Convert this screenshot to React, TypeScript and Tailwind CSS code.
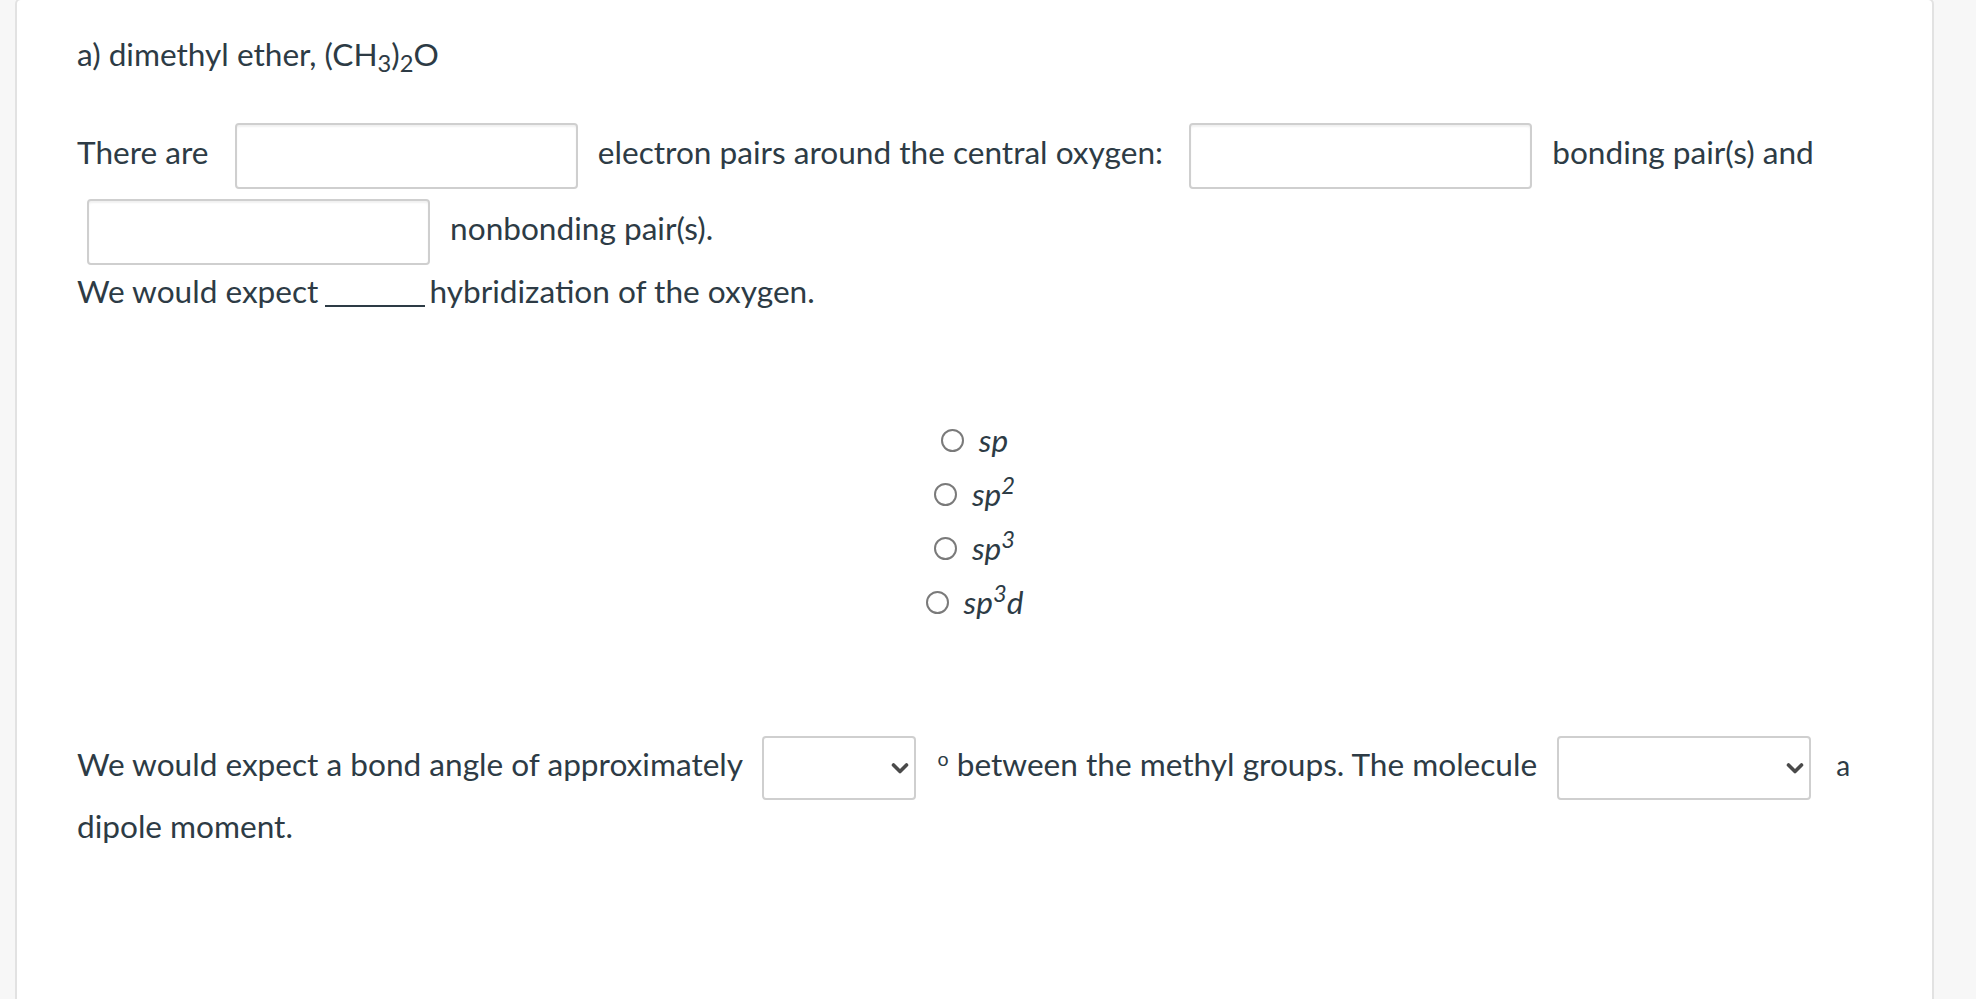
import React from "react";

function Blank({ w }: { w: string }) {
  return (
    <span
      className={`inline-block align-middle h-[66px] my-[5px] ml-[10px] mr-[12px] rounded-[4px] border-2 border-[#cfcfcf] bg-white shadow-[inset_0_2px_2px_rgba(0,0,0,0.06)] ${w}`}
    />
  );
}

function Select({ w }: { w: string }) {
  return (
    <span
      className={`inline-flex items-center justify-end align-middle h-[64px] my-[5px] ml-[12px] mr-[13px] pr-[5px] rounded-[4px] border-2 border-[#cfcfcf] bg-white ${w}`}
    >
      <svg width="18" height="13" viewBox="0 0 18 13">
        <path d="M2.5 3 L9 9.5 L15.5 3" fill="none" stroke="#4a4a4a" strokeWidth="3.6" strokeLinecap="round" strokeLinejoin="round" />
      </svg>
    </span>
  );
}

function Radio({ children }: { children: React.ReactNode }) {
  return (
    <div className="h-[54px] flex items-center justify-center gap-[15px]">
      <span className="w-[23px] h-[23px] rounded-full border-2 border-[#7a7a7a] bg-white" />
      <span className="italic">{children}</span>
    </div>
  );
}

export default function App() {
  return (
    <div className="min-h-[999px] bg-[#f7f7f7] pl-[15px] pr-[42px] font-['Lato','Noto_Sans',sans-serif] text-[#2d3b45] text-[31.6px] leading-[42px]">
      <div className="-mt-[2px] min-h-[1010px] bg-white border-2 border-[#e2e2e2] rounded-[6px] px-[60px] pt-[33px]">
        <p>
          a) dimethyl ether, (CH<sub>3</sub>)<sub>2</sub>O
        </p>
        <p className="mt-[43px]">
          There are{"\u00a0 "}
          <Blank w="w-[343px]" />{" "}
          electron pairs around the central oxygen:{"\u00a0 "}
          <Blank w="w-[343px]" />{" "}
          bonding pair(s) and{"\u00a0 "}
          <Blank w="w-[343px]" />{" "}
          nonbonding pair(s).
        </p>
        <p>
          We would expect{" "}
          <span className="inline-block w-[100px] -ml-[2px] mr-[5px] border-b-2 border-[#2d3b45] align-[-4px]" />
          hybridization of the oxygen.
        </p>
        <div className="mt-[101px]">
          <Radio>sp</Radio>
          <Radio>
            sp<sup>2</sup>
          </Radio>
          <Radio>
            sp<sup>3</sup>
          </Radio>
          <Radio>
            sp<sup>3</sup>d
          </Radio>
        </div>
        <p className="mt-[102px]">
          We would expect a bond angle of approximately{" "}
          <Select w="w-[154px]" />{" "}
          <sup className="text-[0.62em]">o</sup> between the methyl groups. The molecule{" "}
          <Select w="w-[254px]" />{" "}
          <span className="text-[28px] pl-[4px]">a</span> dipole moment.
        </p>
      </div>
    </div>
  );
}
